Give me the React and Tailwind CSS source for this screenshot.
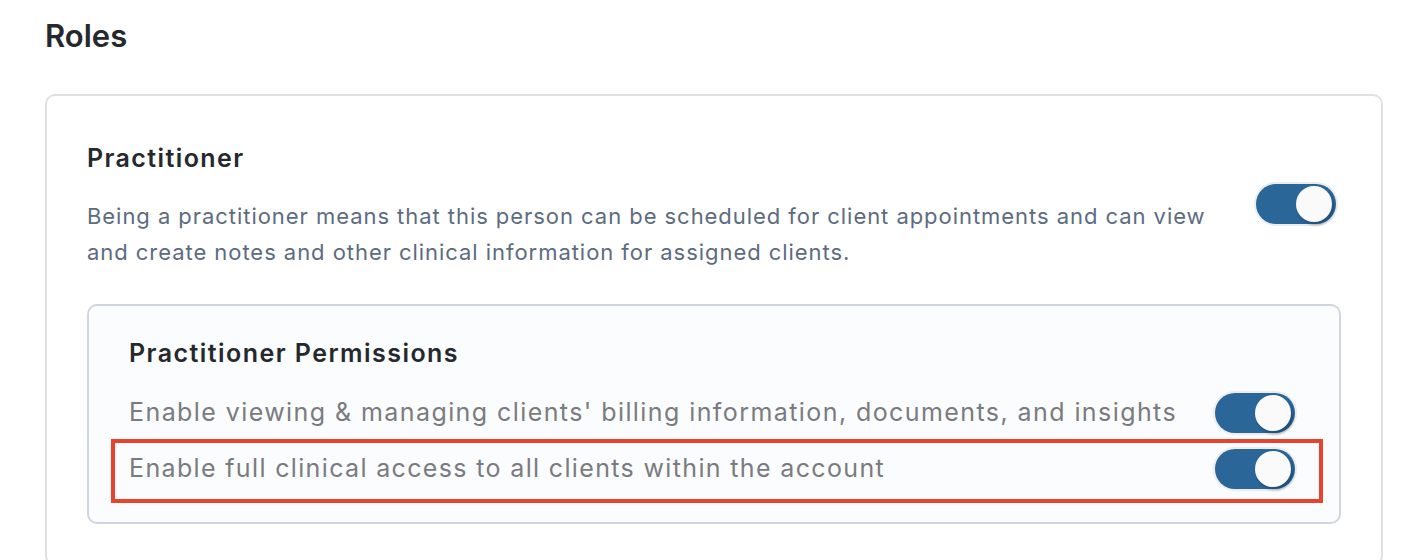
import React, { useState } from "react";

function Toggle({ on, onChange }) {
  return (
    <button
      type="button"
      onClick={() => onChange(!on)}
      className={`relative h-[40px] w-[80px] shrink-0 rounded-full shadow-[0_0_0_2px_#ececec] ${
        on ? "bg-[#2b6699]" : "bg-[#cfd4db]"
      }`}
    >
      <span
        className={`absolute top-[2px] h-[36px] w-[36px] rounded-full bg-[#fafafa] shadow-[2px_3px_3px_rgba(10,40,70,0.35)] ${
          on ? "left-[40px]" : "left-[2px]"
        }`}
      />
    </button>
  );
}

export default function App() {
  const [practitioner, setPractitioner] = useState(true);
  const [billing, setBilling] = useState(true);
  const [fullAccess, setFullAccess] = useState(true);

  return (
    <div className="min-h-screen bg-white pl-[45px] pt-[18px] font-['Inter',sans-serif] text-[#25282d]">
      <h2 className="text-[31px] leading-9 font-semibold">Roles</h2>

      <div className="mt-[40px] w-[1338px] rounded-[10px] border-2 border-[#e0e0e0] px-10 pt-[46px] pb-10">
        <div className="flex gap-10">
          <div className="flex-1">
            <h3 className="text-[25px] leading-8 font-semibold tracking-[1.4px]">Practitioner</h3>
            <p className="mt-6 text-[22px] leading-9 tracking-[0.95px] text-[#5d6b80]">
              Being a practitioner means that this person can be scheduled for client appointments and can view
              <br />
              and create notes and other clinical information for assigned clients.
            </p>
          </div>
          <div className="mt-[42px] mr-[5px]">
            <Toggle on={practitioner} onChange={setPractitioner} />
          </div>
        </div>

        {/* permissions box */}
        <div className="mt-[34px] rounded-[10px] border-2 border-[#cfd6e1] bg-[#fbfcfe] px-10 pt-[31px] pb-[19px]">
          <h4 className="text-[25px] leading-8 font-semibold tracking-[1.45px]">Practitioner Permissions</h4>

          <div className="mt-[22px] flex h-[44px] items-center justify-between pr-1">
            <span className="text-[25px] tracking-[1.42px] text-[#7a7b80]">
              Enable viewing &amp; managing clients' billing information, documents, and insights
            </span>
            <Toggle on={billing} onChange={setBilling} />
          </div>

          <div className="-ml-[18px] -mr-[24px] mt-1 flex h-[64px] items-center justify-between border-4 border-[#e8432c] pb-1 pl-[14px] pr-[24px]">
            <span className="text-[25px] tracking-[1.35px] text-[#7a7b80]">
              Enable full clinical access to all clients within the account
            </span>
            <Toggle on={fullAccess} onChange={setFullAccess} />
          </div>
        </div>
      </div>
    </div>
  );
}
